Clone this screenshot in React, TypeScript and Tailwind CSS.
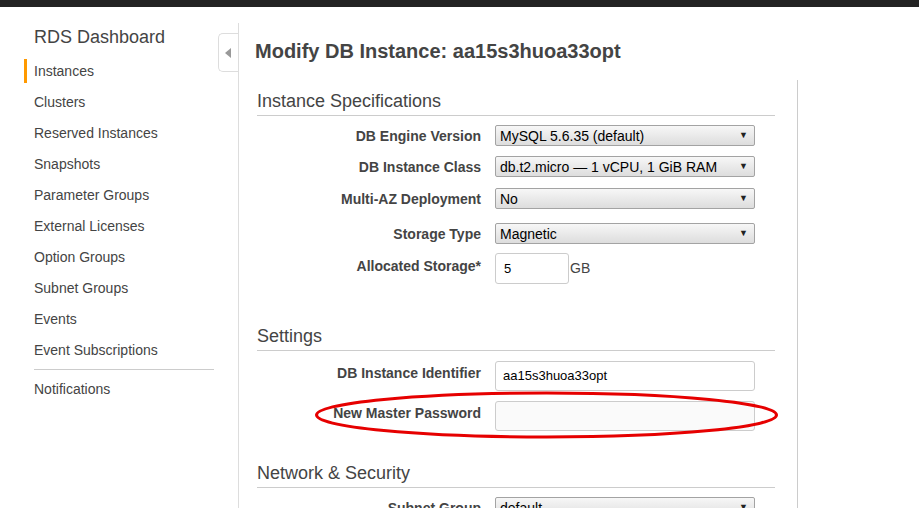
import React from 'react';

const navItems = [
  'Instances',
  'Clusters',
  'Reserved Instances',
  'Snapshots',
  'Parameter Groups',
  'External Licenses',
  'Option Groups',
  'Subnet Groups',
  'Events',
  'Event Subscriptions',
];

const Select = ({ value }: { value: string }) => (
  <div className="ml-[14px] flex h-[21px] w-[260px] items-center justify-between rounded-[2px] border border-[#a3a3a3] bg-gradient-to-b from-[#f7f7f7] to-[#dddddd] pl-[4px] pr-[6px] text-[14px] leading-none text-black">
    <span>{value}</span>
    <span className="text-[9px] text-[#222]">▼</span>
  </div>
);

const Label = ({ children, className = '' }: { children: React.ReactNode; className?: string }) => (
  <div className={`w-[224px] shrink-0 text-right text-[14px] font-bold leading-[16px] text-[#444] ${className}`}>{children}</div>
);

const SectionHead = ({ title, className = '' }: { title: string; className?: string }) => (
  <div className={`border-b border-[#cccccc] pb-[3px] text-[18px] leading-[22px] text-[#444] ${className}`}>{title}</div>
);

const App = () => {
  return (
    <div className="relative h-[508px] w-[919px] overflow-hidden bg-white" style={{ fontFamily: '"Liberation Sans", Arial, sans-serif' }}>
      <div className="h-[7px] bg-[#232323]" />
      <div className="flex">
        {/* sidebar */}
        <div className="w-[238px] shrink-0 pl-[24px] pr-[24px] pt-[19px]">
          <div className="pl-[10px] text-[18px] leading-[22px] text-[#444]">RDS Dashboard</div>
          <ul className="mt-[7px]">
            {navItems.map((item) => (
              <li key={item} className="flex h-[31px] items-center">
                <span className={`border-l-[3px] pl-[7px] text-[14px] leading-[24px] text-[#444] ${item === 'Instances' ? 'border-[#ff9900]' : 'border-transparent'}`}>
                  {item}
                </span>
              </li>
            ))}
          </ul>
          <div className="ml-[10px] mt-[4px] border-t border-[#cccccc]" />
          <div className="mt-[4px] flex h-[31px] items-center pl-[10px] text-[14px] text-[#444]">Notifications</div>
        </div>

        {/* main */}
        <div className="relative mt-[16px] flex-1 border-l border-[#dddddd] pl-[16px] pt-[16px]">
          <div className="absolute left-[-21px] top-[10px] flex h-[39px] w-[20px] items-center justify-center rounded-l-[5px] border border-r-0 border-[#dddddd] bg-white">
            <svg width="7" height="10" viewBox="0 0 7 10">
              <path d="M6 0 L0 5 L6 10 Z" fill="#999" />
            </svg>
          </div>
          <h1 className="text-[20px] font-bold leading-[24px] text-[#444]">Modify DB Instance: aa15s3huoa33opt</h1>

          <div className="mt-[17px] w-[543px] border-r border-[#cccccc] pb-[40px] pl-[2px] pr-[22px] pt-[10px]">
            <SectionHead title="Instance Specifications" />
            <div className="mt-[9px] flex items-center">
              <Label>DB Engine Version</Label>
              <Select value="MySQL 5.6.35 (default)" />
            </div>
            <div className="mt-[10px] flex items-center">
              <Label>DB Instance Class</Label>
              <Select value="db.t2.micro — 1 vCPU, 1 GiB RAM" />
            </div>
            <div className="mt-[11px] flex items-center">
              <Label>Multi-AZ Deployment</Label>
              <Select value="No" />
            </div>
            <div className="mt-[14px] flex items-center">
              <Label>Storage Type</Label>
              <Select value="Magnetic" />
            </div>
            <div className="mt-[9px] flex items-start">
              <Label className="pt-[5px]">Allocated Storage*</Label>
              <div className="ml-[14px] flex items-center">
                <div className="flex h-[31px] w-[74px] items-center rounded-[3px] border border-[#cccccc] bg-white pl-[8px] text-[13px] text-black">5</div>
                <span className="ml-[1px] text-[14px] text-[#444]">GB</span>
              </div>
            </div>

            <SectionHead title="Settings" className="mt-[41px]" />
            <div className="mt-[10px] flex items-start">
              <Label className="pt-[4px]">DB Instance Identifier</Label>
              <div className="ml-[14px] flex h-[30px] w-[260px] items-center rounded-[3px] border border-[#cccccc] bg-white pl-[7px] text-[13px] text-black">aa15s3huoa33opt</div>
            </div>
            <div className="mt-[10px] flex items-start">
              <Label className="pt-[4px]">New Master Password</Label>
              <div className="ml-[14px] h-[30px] w-[260px] rounded-[3px] border border-[#cccccc] bg-[#fafafa]" />
            </div>

            <SectionHead title="Network & Security" className="mt-[31px]" />
            <div className="mt-[9px] flex items-center">
              <Label>Subnet Group</Label>
              <Select value="default" />
            </div>
          </div>
        </div>
      </div>

      {/* annotation */}
      <svg className="pointer-events-none absolute left-0 top-0" width="919" height="508">
        <ellipse cx="546.5" cy="415" rx="230" ry="22" fill="none" stroke="#e60000" strokeWidth="3" />
      </svg>
    </div>
  );
};

export default App;
